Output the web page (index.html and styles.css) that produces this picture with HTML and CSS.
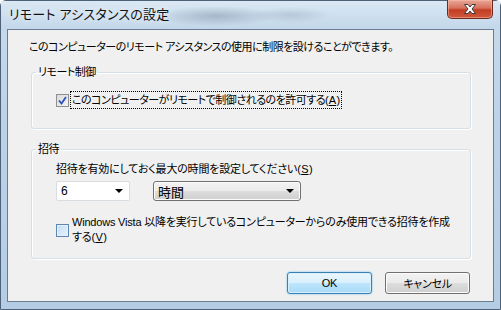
FILE: index.html
```html
<!DOCTYPE html>
<html lang="ja">
<head>
    <meta charset="UTF-8">
    <title>リモート アシスタンスの設定</title>
    <link rel="stylesheet" href="styles.css">
</head>
<body>
    <div class="window">
        <div class="titlebar">
            <span class="title">リモート アシスタンスの設定</span>
            <div class="close-btn">
                <svg width="16" height="12" viewBox="0 0 16 12">
                    <path d="M2.5 1.5 H6 L8 4 L10 1.5 H13.5 L10 6 L13.5 10.5 H10 L8 8 L6 10.5 H2.5 L6 6 Z" fill="#ffffff" stroke="#3b3b3b" stroke-width="1" stroke-linejoin="round"/>
                </svg>
            </div>
        </div>

        <div class="client">
            <p class="intro">このコンピューターのリモート アシスタンスの使用に制限を設けることができます。</p>

            <fieldset class="group">
                <legend>リモート制御</legend>
                <div class="group-body">
                    <label class="check check-first">
                        <span class="box box-checked">
                            <svg width="9" height="9" viewBox="0 0 9 9">
                                <path d="M1 4.5 L3.5 7.5 L8 1" fill="none" stroke="#2a52b8" stroke-width="1.8"/>
                            </svg>
                        </span>
                        <span class="check-text focus">このコンピューターがリモートで制御されるのを許可する(<u>A</u>)</span>
                    </label>
                </div>
            </fieldset>

            <fieldset class="group group-invite">
                <legend>招待</legend>
                <div class="group-body">
                    <p class="hint">招待を有効にしておく最大の時間を設定してください(<u>S</u>)</p>
                    <div class="selects">
                        <div class="combo combo-edit">
                            <span>6</span>
                            <span class="arrow"></span>
                        </div>
                        <div class="combo combo-list">
                            <span>時間</span>
                            <span class="arrow"></span>
                        </div>
                    </div>
                    <label class="check check-vista">
                        <span class="box box-blue"></span>
                        <span class="check-text">Windows Vista 以降を実行しているコンピューターからのみ使用できる招待を作成する(<u>V</u>)</span>
                    </label>
                </div>
            </fieldset>

            <div class="buttons">
                <button class="btn btn-default">OK</button>
                <button class="btn">キャンセル</button>
            </div>
        </div>
    </div>
</body>
</html>
```

FILE: styles.css
```css
* {
    margin: 0;
    padding: 0;
    box-sizing: border-box;
}

body {
    width: 501px;
    height: 310px;
    overflow: hidden;
    font-family: "Liberation Sans", "Noto Sans CJK JP", sans-serif;
    font-size: 11px;
    letter-spacing: -0.5px;
    font-feature-settings: "palt";
    color: #000;
}

u {
    letter-spacing: 0;
    padding: 0 0.5px;
}

.window {
    width: 501px;
    height: 310px;
    display: flex;
    flex-direction: column;
    background: linear-gradient(180deg, #c9dbec 0%, #bcd2e7 40%, #b5cde4 100%);
    border: 1px solid #4d6178;
    border-radius: 6px 6px 0 0;
}

.titlebar {
    height: 28px;
    display: flex;
    justify-content: space-between;
    align-items: flex-start;
    padding-left: 8px;
    background:
        radial-gradient(ellipse 60px 10px at 215px 15px, rgba(90, 110, 130, 0.35), transparent),
        radial-gradient(ellipse 40px 8px at 290px 14px, rgba(110, 130, 150, 0.25), transparent),
        linear-gradient(180deg, #dbe8f4 0%, #c2d7ea 100%);
}

.title {
    font-size: 13px;
    letter-spacing: 0.2px;
    line-height: 28px;
    color: #111;
    text-shadow: 0 0 6px rgba(255, 255, 255, 0.9);
}

.close-btn {
    width: 46px;
    height: 19px;
    margin-top: -1px;
    margin-right: 7px;
    display: flex;
    align-items: center;
    justify-content: center;
    border: 1px solid #6d2a1c;
    border-top: none;
    border-radius: 0 0 5px 5px;
    background: linear-gradient(180deg, #e8a999 0%, #d7705b 45%, #c33d23 55%, #d0593d 100%);
    box-shadow: inset 0 0 0 1px rgba(255, 190, 170, 0.5);
}

.client {
    flex: 1;
    margin: 0 6px 7px 6px;
    border: 1px solid #6a7c8f;
    background: #f0f0f0;
    padding: 9px 22px 0 23px;
}

.intro {
    line-height: 16px;
    margin-left: -2px;
}

.group {
    border: 1px solid #d5dfe5;
    border-radius: 3px;
    box-shadow: inset 1px 1px 0 #ffffff, 1px 1px 0 #ffffff;
    padding: 0 0 20px 4px;
    margin-top: 9px;
}

.group legend {
    padding: 0 2px;
    line-height: 16px;
}

.group-body {
    padding-left: 20px;
}

.check {
    display: flex;
    align-items: flex-start;
}

.check-first {
    margin-top: 12px;
    align-items: center;
}

.box {
    width: 13px;
    height: 13px;
    flex-shrink: 0;
    display: flex;
    align-items: center;
    justify-content: center;
}

.box-checked {
    border: 1px solid #8e8f8f;
    background: linear-gradient(135deg, #d9dadb 0%, #f4f4f4 100%);
}

.box-blue {
    margin-top: 9px;
    border: 1px solid #5c87b2;
    background: linear-gradient(135deg, #c2dcf4 0%, #e9f3fc 100%);
    box-shadow: inset 0 0 0 1px #e6f1fb;
}

.check-text {
    margin-left: 2px;
    line-height: 14px;
}

.focus {
    outline: 1px dotted #000;
    padding: 1px 1px;
}

.group-invite {
    margin-top: 12px;
    padding-bottom: 13px;
}

.hint {
    margin-top: 4px;
    line-height: 16px;
    letter-spacing: -0.2px;
}

.selects {
    display: flex;
    gap: 23px;
    margin-top: 4px;
}

.combo {
    height: 20px;
    display: flex;
    align-items: center;
    justify-content: space-between;
    padding: 0 6px 0 4px;
    letter-spacing: 0;
}

.combo-edit {
    width: 74px;
    font-size: 12px;
    background: #ffffff;
    border: 1px solid #d8dde2;
    border-radius: 2px;
}

.combo-list {
    width: 148px;
    border: 1px solid #707070;
    border-radius: 3px;
    background: linear-gradient(180deg, #f2f2f2 0%, #ebebeb 50%, #dddddd 51%, #cfcfcf 100%);
    box-shadow: inset 0 0 0 1px #fcfcfc;
    font-size: 13px;
}

.arrow {
    width: 0;
    height: 0;
    border-left: 4px solid transparent;
    border-right: 4px solid transparent;
    border-top: 4px solid #000;
}

.check-vista {
    margin-top: 14px;
}

.check-vista .check-text {
    margin-left: 3px;
    max-width: 386px;
    line-height: 15px;
    letter-spacing: -0.2px;
}

.buttons {
    display: flex;
    justify-content: flex-end;
    gap: 13px;
    margin-top: 13px;
    padding-right: 1px;
}

.btn {
    width: 85px;
    height: 22px;
    font-family: inherit;
    font-size: 11px;
    letter-spacing: -0.3px;
    font-feature-settings: "palt";
    color: #000;
    border: 1px solid #707070;
    border-radius: 3px;
    background: linear-gradient(180deg, #f2f2f2 0%, #ebebeb 50%, #dddddd 51%, #cfcfcf 100%);
    box-shadow: inset 0 0 0 1px #fcfcfc;
}

.btn-default {
    border-color: #3c7fb1;
    background: linear-gradient(180deg, #eaf6fd 0%, #d9f0fc 50%, #bee6fd 51%, #a7d9f5 100%);
    box-shadow: inset 0 0 0 1px #d8f0fb, 0 0 2px #5ec0f0;
}
```
